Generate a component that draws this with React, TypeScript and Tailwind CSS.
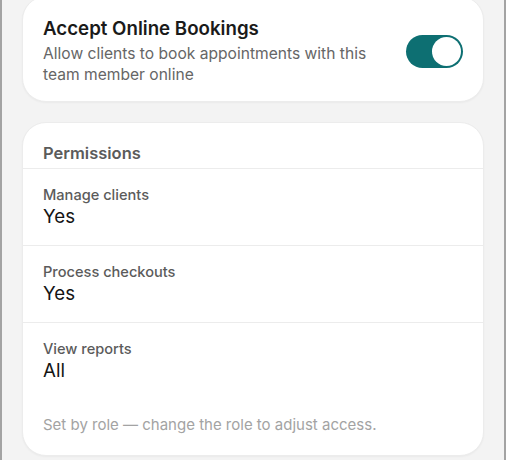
import { useState } from 'react';

const permissions = [
    { label: 'Manage clients', value: 'Yes' },
    { label: 'Process checkouts', value: 'Yes' },
    { label: 'View reports', value: 'All' },
];

const Toggle = ({ on, onChange }: { on: boolean; onChange: () => void }) => (
    <button
        type="button"
        onClick={onChange}
        className={`flex h-[33px] w-[57px] shrink-0 items-center rounded-full p-[2px] ${
            on ? 'justify-end bg-[#0d6f72]' : 'justify-start bg-[#d4d4d4]'
        }`}
    >
        <span className="h-[29px] w-[29px] rounded-full bg-white" />
    </button>
);

const App = () => {
    const [online, setOnline] = useState(true);

    return (
        <div className="min-h-[460px] border-x-2 border-[#a3a3a3] bg-[#f3f3f3] px-5 font-['Inter','Liberation_Sans',sans-serif]">
            <div className="flex flex-col gap-5">
                <div className="-mt-1 flex items-center gap-4 rounded-3xl border border-[#ececec] bg-white px-5 pt-5 pb-4 shadow-[0_1px_2px_rgba(0,0,0,0.04)]">
                    <div className="flex-1">
                        <h2 className="text-[18.7px] leading-6 font-semibold text-[#1a1a1a]">
                            Accept Online Bookings
                        </h2>
                        <p className="mt-[2px] text-[15.6px] leading-[21px] text-[#666]">
                            Allow clients to book appointments with this team
                            member online
                        </p>
                    </div>
                    <Toggle on={online} onChange={() => setOnline((v) => !v)} />
                </div>

                <div className="rounded-3xl border border-[#ececec] bg-white shadow-[0_1px_2px_rgba(0,0,0,0.04)]">
                    <h3 className="border-b border-[#ececec] px-5 pt-5 pb-[5px] text-[16.5px] leading-5 font-semibold text-[#5b5b5b]">
                        Permissions
                    </h3>
                    {permissions.map((p, i) => (
                        <div
                            key={p.label}
                            className={`px-5 py-4 ${
                                i < permissions.length - 1
                                    ? 'border-b border-[#ececec]'
                                    : ''
                            }`}
                        >
                            <div className="text-[14.6px] leading-5 font-medium text-[#5b5b5b]">
                                {p.label}
                            </div>
                            <div className="text-[18.7px] leading-6 text-[#141414]">
                                {p.value}
                            </div>
                        </div>
                    ))}
                    <p className="px-5 pt-4 pb-5 text-[15px] leading-5 text-[#a3a3a3]">
                        Set by role — change the role to adjust access.
                    </p>
                </div>
            </div>
        </div>
    );
};

export default App;
